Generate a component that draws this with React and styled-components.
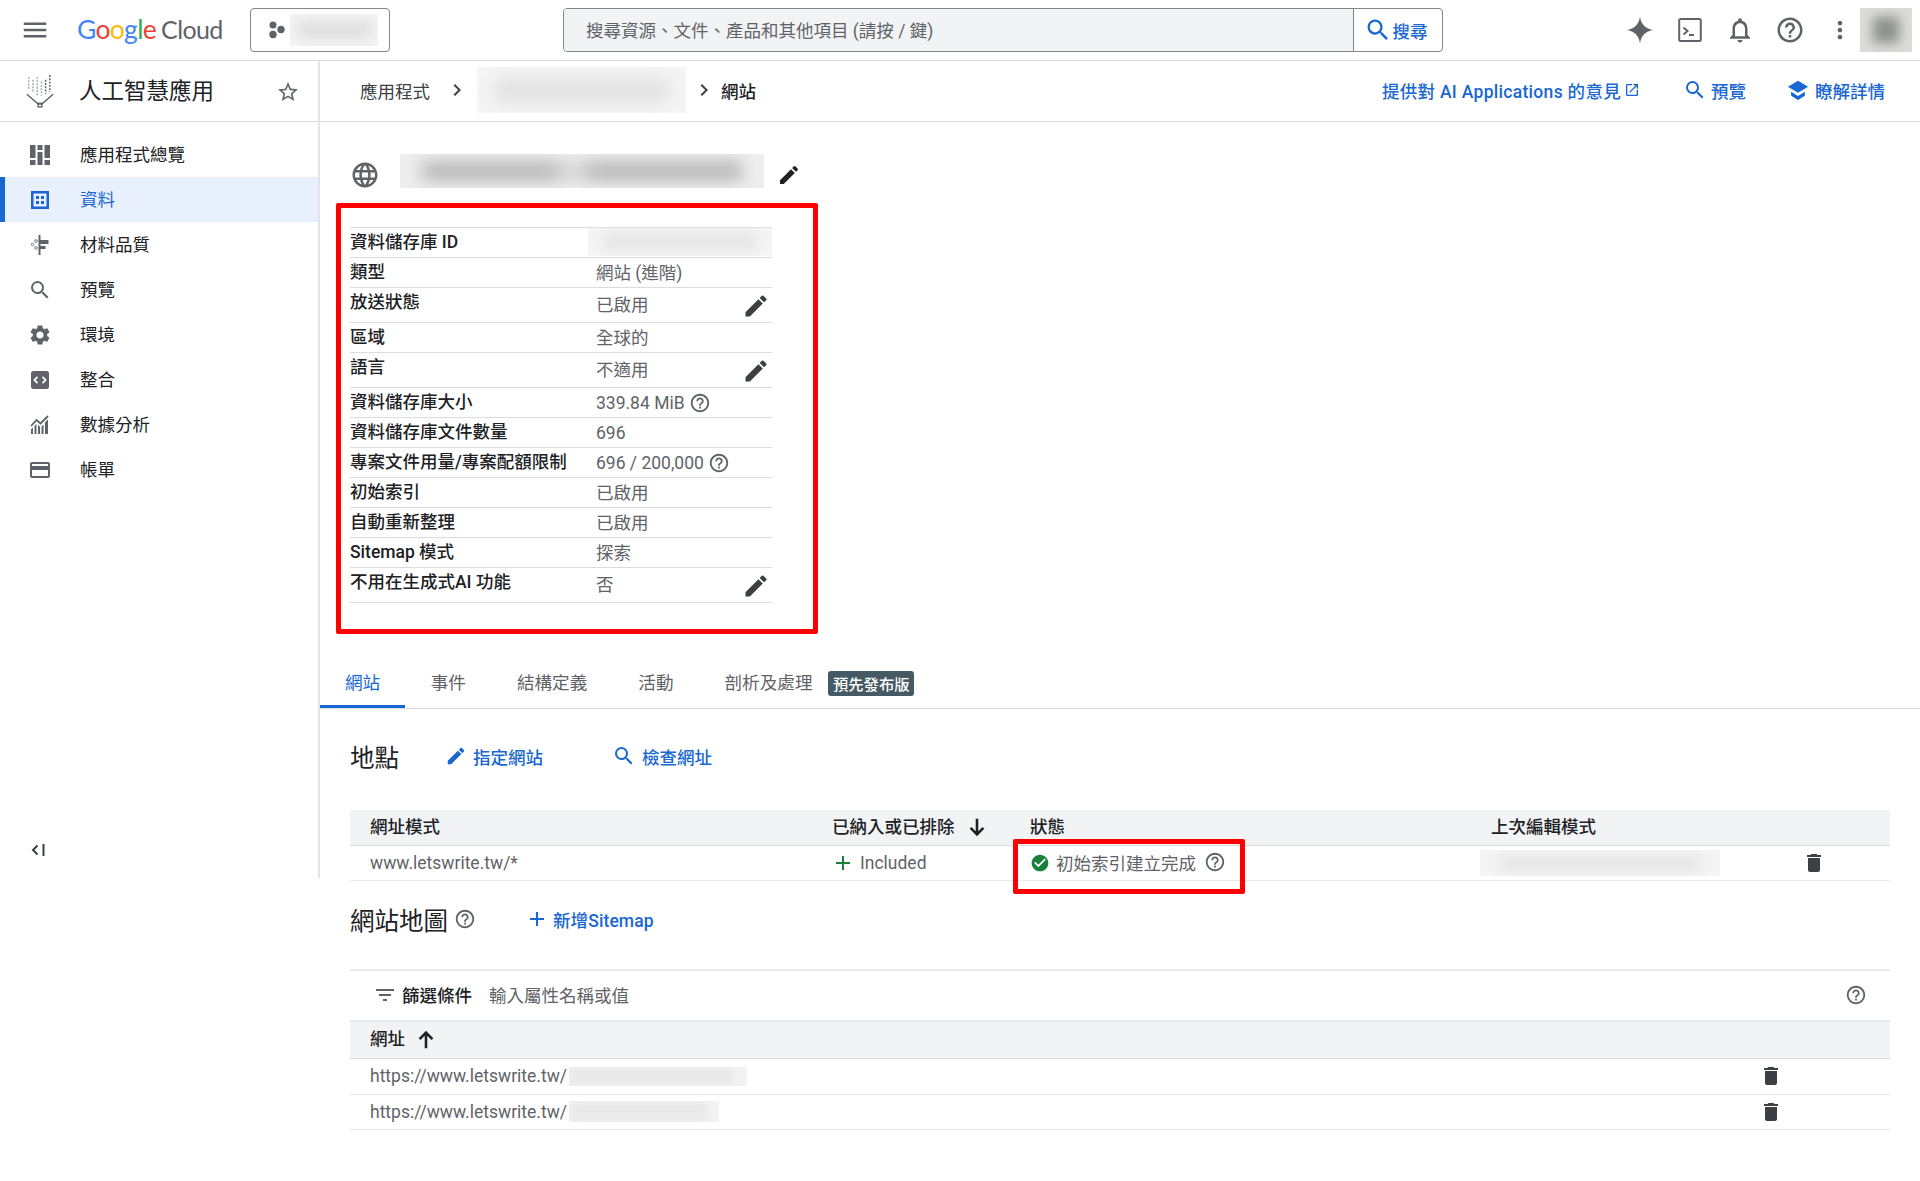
import React from "react";
import styled, { createGlobalStyle, css } from "styled-components";
import {
  MdAdd,
  MdCheckCircle,
  MdChevronRight,
  MdCreditCard,
  MdDelete,
  MdEdit,
  MdFilterList,
  MdHelpOutline,
  MdLanguage,
  MdMenu,
  MdMoreVert,
  MdOpenInNew,
  MdOutlineNotifications,
  MdSearch,
  MdSettings,
  MdStarBorder,
} from "react-icons/md";

const BLUE = "#1967d2";
const INK = "#202124";
const GREY = "#5f6368";
const LINE = "#dadce0";

const GlobalStyle = createGlobalStyle`
  html, body { margin: 0; background: #fff; }
  body {
    font-family: Roboto, "Noto Sans CJK TC", sans-serif;
    font-size: 17.5px;
    color: ${INK};
  }
  * { box-sizing: border-box; }
`;

/* blurred-out private values */
const Redacted = styled.div`
  position: relative;
  flex: none;
  overflow: hidden;
  width: ${(p) => p.$w}px;
  height: ${(p) => p.$h}px;
  background: ${(p) => p.$bg || "#f5f5f5"};
  &::after {
    content: "";
    position: absolute;
    inset: ${(p) => p.$inset || "25% 8%"};
    background: ${(p) => p.$tone || "#e2e2e2"};
    filter: blur(${(p) => p.$blur || 7}px);
  }
`;

/* the red boxes drawn over the screenshot */
const Annotation = styled.div`
  position: absolute;
  top: ${(p) => p.$top}px;
  left: ${(p) => p.$left}px;
  width: ${(p) => p.$w}px;
  height: ${(p) => p.$h}px;
  border: 5px solid #ff0000;
  border-radius: 2px;
  pointer-events: none;
`;

const TopBar = styled.header`
  display: flex;
  align-items: center;
  height: 61px;
  padding: 0 8px 0 20px;
  border-bottom: 1px solid ${LINE};
`;

const IconSlot = styled.span`
  display: inline-flex;
  align-items: center;
  justify-content: center;
  width: ${(p) => p.$size || 40}px;
  height: 40px;
  flex: none;
  color: ${GREY};
`;

const Logo = styled.div`
  width: 173px;
  margin-left: 27px;
  padding-bottom: 2px;
  font-family: Lato, Roboto, sans-serif;
  font-size: 26.5px;
  line-height: 1;
  letter-spacing: -0.7px;
  white-space: nowrap;
  flex: none;
`;

const LogoLetter = styled.span`
  color: ${(p) => p.$color};
`;

const CloudWord = styled.span`
  margin-left: 5px;
  color: ${GREY};
  font-size: 25px;
  letter-spacing: -0.6px;
`;

const ProjectButton = styled.div`
  display: flex;
  align-items: center;
  gap: 4px;
  width: 140px;
  height: 44px;
  padding-left: 17px;
  border: 1px solid #80868b;
  border-radius: 4px;
  flex: none;
`;

const SearchBox = styled.div`
  display: flex;
  width: 880px;
  height: 44px;
  margin-left: 173px;
  border: 1px solid #80868b;
  border-radius: 4px;
  overflow: hidden;
  flex: none;
`;

const SearchInput = styled.div`
  flex: 1;
  display: flex;
  align-items: center;
  padding: 0 0 2px 22px;
  background: #f1f3f4;
  color: ${GREY};
`;

const SearchButton = styled.div`
  display: flex;
  align-items: center;
  justify-content: center;
  width: 89px;
  padding-right: 5px;
  gap: 1px;
  border-left: 1px solid #80868b;
  color: ${BLUE};
  font-weight: 500;
`;

const TopActions = styled.div`
  display: flex;
  align-items: center;
  gap: 10px;
  margin-left: auto;
`;

const Avatar = styled(Redacted)`
  margin-left: -10px;
`;

const Body = styled.div`
  display: flex;
  align-items: flex-start;
`;

const Sidebar = styled.aside`
  display: flex;
  flex-direction: column;
  width: 320px;
  height: 817px;
  border-right: 2px solid #e3e4e6;
  flex: none;
`;

const SidebarHead = styled.div`
  display: flex;
  align-items: center;
  height: 61px;
  padding-left: 24px;
  border-bottom: 1px solid ${LINE};
  flex: none;
`;

const AppLogoBox = styled.span`
  display: inline-flex;
  margin-left: 1px;
`;

const ProductName = styled.div`
  margin-left: 24px;
  padding-bottom: 4px;
  font-size: 22.5px;
  width: 197px;
`;

const Star = styled(MdStarBorder)`
  margin-top: 2px;
  color: ${GREY};
`;

const NavList = styled.nav`
  display: flex;
  flex-direction: column;
  padding-top: 10px;
`;

const NavItem = styled.div`
  display: flex;
  align-items: center;
  height: 45px;
  padding: 0 0 2px 30px;
  gap: 30px;
  color: ${INK};
  svg { flex: none; color: ${GREY}; margin-top: 2px; }
  ${(p) =>
    p.$active &&
    css`
      background: #e8f0fe;
      color: ${BLUE};
      box-shadow: inset 5px 0 0 ${BLUE};
      svg { color: ${BLUE}; }
    `}
`;

const BigNavIcon = styled.span`
  display: inline-flex;
  margin: 0 -2px;
`;

const Collapse = styled.div`
  margin-top: auto;
  padding: 0 0 18px 29px;
  display: flex;
  color: #3c4043;
`;

const Main = styled.main`
  flex: 1;
  min-width: 0;
`;

const PageBar = styled.div`
  display: flex;
  align-items: center;
  height: 61px;
  padding: 0 35px 2px 40px;
  border-bottom: 1px solid ${LINE};
`;

const Crumb = styled.span`
  color: ${(p) => (p.$current ? INK : "#3c4043")};
  font-weight: ${(p) => (p.$current ? 500 : 400)};
`;

const CrumbArrow = styled.span`
  display: inline-flex;
  margin: ${(p) => p.$margin};
  color: #3c4043;
`;

const PageActions = styled.div`
  display: flex;
  align-items: center;
  margin-left: auto;
`;

const BlueLink = styled.span`
  display: inline-flex;
  align-items: center;
  gap: ${(p) => p.$gap ?? 7}px;
  margin-left: ${(p) => p.$ml || 0}px;
  color: ${BLUE};
  font-weight: 500;
  letter-spacing: ${(p) => p.$track || 0}px;
  white-space: nowrap;
`;

const NudgedSearch = styled(MdSearch)`
  margin: 0 -3px;
`;

const Detail = styled.section`
  padding: 32px 0 0 30px;
`;

const TitleRow = styled.div`
  display: flex;
  align-items: center;
  height: 34px;
  color: ${GREY};
`;

const TitleGlobe = styled(MdLanguage)`
  margin: 8px 20px 0 0;
`;

const TitleEdit = styled.span`
  display: inline-flex;
  margin: 8px 0 0 13px;
  color: #202124;
`;

const PropertyPanel = styled.div`
  position: relative;
  width: 422px;
  margin-top: 39px;
  border-top: 1px solid ${LINE};
`;

const PropertyRow = styled.div`
  display: grid;
  grid-template-columns: 246px 1fr 30px;
  height: ${(p) => (p.$edit ? 35 : 30)}px;
  border-bottom: 1px solid ${LINE};
  line-height: 28px;
  white-space: nowrap;
`;

const PropertyName = styled.div`
  color: ${INK};
  font-weight: 500;
`;

const PropertyValue = styled.div`
  display: flex;
  align-items: center;
  gap: 4px;
  height: 28px;
  margin-top: ${(p) => (p.$edit ? 3 : 1)}px;
  color: ${GREY};
`;

const PropertyRedacted = styled(Redacted)`
  grid-column: 2 / 4;
  margin-left: -8px;
`;

const PropertyEdit = styled.div`
  display: flex;
  align-items: center;
  color: #3c4043;
  margin-top: 2px;
`;

const Tabs = styled.div`
  display: flex;
  align-items: center;
  height: 51px;
  margin-top: 55px;
  border-bottom: 1px solid ${LINE};
`;

const Tab = styled.div`
  display: flex;
  align-items: center;
  height: 50px;
  padding: 0 ${(p) => (p.$active ? 25 : 25.5)}px 3px;
  font-size: 17.6px;
  color: ${(p) => (p.$active ? BLUE : GREY)};
  box-shadow: ${(p) => (p.$active ? `inset 0 -3px 0 ${BLUE}` : "none")};
`;

const PreviewBadge = styled.span`
  display: inline-flex;
  align-items: center;
  height: 25px;
  padding: 0 5px 1px;
  margin-left: -10px;
  background: #455a64;
  border-radius: 3px;
  color: #fff;
  font-size: 15.3px;
  font-weight: 500;
`;

const Section = styled.section`
  padding: 0 30px;
`;

const SectionHead = styled.div`
  display: flex;
  align-items: center;
  height: 40px;
  margin-top: ${(p) => p.$mt}px;
  padding-bottom: 2px;
`;

const SectionTitle = styled.h2`
  margin: 0;
  font-size: 24.5px;
  font-weight: 400;
  color: ${INK};
  white-space: nowrap;
`;

const HelpIcon = styled(MdHelpOutline)`
  color: ${GREY};
  flex: none;
  margin-left: ${(p) => p.$ml || 0}px;
`;

const TableHead = styled.div`
  display: grid;
  grid-template-columns: ${(p) => p.$cols};
  align-items: center;
  height: ${(p) => p.$h}px;
  margin-top: ${(p) => p.$mt || 0}px;
  padding-bottom: 5px;
  background: #f1f3f4;
  border-bottom: 1px solid ${LINE};
  font-weight: 500;
  color: ${INK};
`;

const TableRow = styled.div`
  display: grid;
  grid-template-columns: ${(p) => p.$cols};
  height: ${(p) => p.$h}px;
  border-bottom: 1px solid ${(p) => p.$line || "#e8eaed"};
  color: ${GREY};
`;

const Cell = styled.div`
  position: relative;
  display: flex;
  align-items: center;
  padding-left: ${(p) => p.$pl || 0}px;
  padding-bottom: ${(p) => p.$pb || 0}px;
  gap: ${(p) => p.$gap || 0}px;
  white-space: nowrap;
  min-width: 0;
`;

const StatusIcon = styled(MdCheckCircle)`
  color: #188038;
  flex: none;
  margin-top: 2px;
`;

const RowTrash = styled(MdDelete)`
  color: #3c4043;
  flex: none;
`;

const RowRedacted = styled(Redacted)`
  margin-left: ${(p) => p.$ml || 0}px;
`;

const ArrowSvg = styled.svg`
  flex: none;
  margin-top: 4px;
  transform: rotate(${(p) => (p.$up ? 180 : 0)}deg);
`;

const FilterBar = styled.div`
  display: flex;
  align-items: center;
  height: 53px;
  margin-top: 29px;
  padding: 0 23px 2px 23px;
  border-top: 2px solid #e8eaed;
  border-bottom: 2px solid #e8eaed;
`;

const FilterLabel = styled.span`
  margin-left: 5px;
  font-weight: 500;
  color: ${INK};
`;

const FilterHint = styled.span`
  margin-left: 17px;
  color: ${GREY};
`;

const FilterHelp = styled(HelpIcon)`
  margin-left: auto;
`;

const SortArrow = ({ up }) => (
  <ArrowSvg $up={up} width="22" height="22" viewBox="0 0 24 24" fill="none" stroke="#202124" strokeWidth="2.800">
    <path d="M12 3v17M5 13l7 7 7-7" />
  </ArrowSvg>
);

const ProjectDots = () => (
  <svg width="18" height="18" viewBox="0 0 18 18" fill="#5f6368">
    <circle cx="5" cy="4" r="3.5" />
    <circle cx="13" cy="8.5" r="3.7" />
    <circle cx="5" cy="13.5" r="3.7" />
  </svg>
);

const SparkIcon = () => (
  <svg width="30" height="30" viewBox="0 0 30 30" fill="#5f6368">
    <path d="M15 1.5c1 7.6 5.4 12.4 13.5 13.5C20.4 16.1 16 20.9 15 28.5 14 20.9 9.6 16.1 1.5 15 9.6 13.9 14 9.1 15 1.5z" />
  </svg>
);

const TerminalIcon = () => (
  <svg width="24" height="30" viewBox="0 0 24 30" fill="none" stroke="#5f6368">
    <rect x="1.2" y="4" width="21.6" height="22" rx="1.5" strokeWidth="2" />
    <path d="M5.5 12.5 9.5 16l-4 3.5" strokeWidth="2" />
    <path d="M11 20h5" strokeWidth="2" />
  </svg>
);

const SchoolIcon = () => (
  <svg width="22" height="24" viewBox="0 0 24 24" fill={BLUE}>
    <path d="M12 2 1 8.500 12 15l11-6.500z" />
    <path d="M4.500 14v4.300L12 23l7.500-4.700V14L12 18.500z" />
  </svg>
);

const AppLogo = () => (
  <svg width="30" height="34" viewBox="0 0 32 36" fill="none">
    <g stroke="#9aa0a6" strokeWidth="1.400" strokeDasharray="2 1.500">
      <path d="M4 3v13M8.500 6v14M13 3v20M17.500 8v15" />
    </g>
    <g stroke="#5f6368" strokeWidth="1.600" strokeDasharray="2 1.500">
      <path d="M22 6v15M26.500 1v18" />
    </g>
    <path d="M2 21.500 14 32h4l12-10.500" stroke="#5f6368" strokeWidth="1.500" />
    <rect x="14" y="31" width="4" height="4" stroke="#5f6368" strokeWidth="1.400" />
  </svg>
);

const OverviewIcon = () => (
  <svg width="20" height="20" viewBox="0 0 20 20" fill="currentColor">
    <rect x="0" y="0" width="5.500" height="13" />
    <rect x="0" y="15" width="5.500" height="5" />
    <rect x="7.500" y="0" width="5" height="5" />
    <rect x="7.500" y="7" width="5" height="13" />
    <rect x="14.500" y="0" width="5.500" height="13" />
    <rect x="14.500" y="15" width="5.500" height="5" />
  </svg>
);

const DataIcon = () => (
  <svg width="20" height="20" viewBox="0 0 20 20" fill="currentColor">
    <path d="M1 1h18v18H1zM3.500 3.500v13h13v-13z" fillRule="evenodd" />
    <rect x="6" y="6" width="3" height="3" />
    <rect x="11" y="6" width="3" height="3" />
    <rect x="6" y="11" width="3" height="3" />
    <rect x="11" y="11" width="3" height="3" />
  </svg>
);

const QualityIcon = () => (
  <svg width="20" height="20" viewBox="0 0 20 20" fill="none">
    <path d="M9.500 0v20" stroke="currentColor" strokeWidth="2" />
    <rect x="9.500" y="5" width="9" height="4" fill="currentColor" />
    <rect x="9.500" y="11" width="6" height="3" fill="currentColor" />
    <circle cx="6" cy="6" r="1.300" stroke="currentColor" strokeWidth="0.800" />
    <circle cx="2.500" cy="9.500" r="1.300" stroke="currentColor" strokeWidth="0.800" />
    <circle cx="6" cy="13" r="1.300" stroke="currentColor" strokeWidth="0.800" />
  </svg>
);

const IntegrationIcon = () => (
  <svg width="20" height="20" viewBox="0 0 20 20">
    <rect x="1" y="1" width="18" height="18" rx="2.500" fill="currentColor" />
    <path d="M7.500 6.800 4.500 10l3 3.200M12.500 6.800l3 3.200-3 3.200" fill="none" stroke="#fff" strokeWidth="1.800" />
  </svg>
);

const AnalyticsIcon = () => (
  <svg width="20" height="20" viewBox="0 0 20 20" fill="currentColor">
    <path d="M1 11 6.500 5l4 3.500L18 1" fill="none" stroke="currentColor" strokeWidth="1.800" />
    <path d="M1 14.500l2-2V19H1zM4.500 11l2-2v10h-2zM8 10l2 1.800V19H8zM11.500 11.500l2-2V19h-2zM15 7.500l3-3.200V19h-3z" />
  </svg>
);

const CollapseIcon = () => (
  <svg width="20" height="20" viewBox="0 0 20 20" fill="none" stroke="currentColor" strokeWidth="2">
    <path d="M8.500 5.500 4 10l4.500 4.500M14.500 4v12" />
  </svg>
);

const navItems = [
  { label: "應用程式總覽", icon: <OverviewIcon /> },
  { label: "資料", icon: <DataIcon />, active: true },
  { label: "材料品質", icon: <QualityIcon /> },
  { label: "預覽", icon: <BigNavIcon><MdSearch size={24} /></BigNavIcon> },
  { label: "環境", icon: <BigNavIcon><MdSettings size={24} /></BigNavIcon> },
  { label: "整合", icon: <IntegrationIcon /> },
  { label: "數據分析", icon: <AnalyticsIcon /> },
  { label: "帳單", icon: <BigNavIcon><MdCreditCard size={24} /></BigNavIcon> },
];

const properties = [
  { name: "資料儲存庫 ID", redacted: true },
  { name: "類型", value: "網站 (進階)" },
  { name: "放送狀態", value: "已啟用", edit: true },
  { name: "區域", value: "全球的" },
  { name: "語言", value: "不適用", edit: true },
  { name: "資料儲存庫大小", value: "339.84 MiB", help: true },
  { name: "資料儲存庫文件數量", value: "696" },
  { name: "專案文件用量/專案配額限制", value: "696 / 200,000", help: true },
  { name: "初始索引", value: "已啟用" },
  { name: "自動重新整理", value: "已啟用" },
  { name: "Sitemap 模式", value: "探索" },
  { name: "不用在生成式AI 功能", value: "否", edit: true },
];

const googleLetters = [
  ["G", "#4285F4"],
  ["o", "#EA4335"],
  ["o", "#FBBC05"],
  ["g", "#4285F4"],
  ["l", "#34A853"],
  ["e", "#EA4335"],
];

const SITE_COLS = "481px 197px 461px 1fr 100px";
const MAP_COLS = "1fr 131px";

const TITLE_BLOBS = "linear-gradient(90deg, #b9b9b9 0 40%, #dedede 47%, #b9b9b9 54% 100%)";

const sitemapRows = [
  { w: 178, h: 19 },
  { w: 150, h: 21 },
];

export default function App() {
  return (
    <>
      <GlobalStyle />
      <TopBar>
        <MdMenu size={30} color={GREY} />
        <Logo>
          {googleLetters.map(([ch, color], i) => (
            <LogoLetter key={i} $color={color}>
              {ch}
            </LogoLetter>
          ))}
          <CloudWord>Cloud</CloudWord>
        </Logo>
        <ProjectButton>
          <ProjectDots />
          <Redacted $w={88} $h={32} $bg="#f4f4f4" $tone="#dcdcdc" />
        </ProjectButton>
        <SearchBox>
          <SearchInput>搜尋資源、文件、產品和其他項目 (請按 / 鍵)</SearchInput>
          <SearchButton>
            <MdSearch size={28} />
            搜尋
          </SearchButton>
        </SearchBox>
        <TopActions>
          <IconSlot>
            <SparkIcon />
          </IconSlot>
          <IconSlot>
            <TerminalIcon />
          </IconSlot>
          <IconSlot>
            <MdOutlineNotifications size={30} />
          </IconSlot>
          <IconSlot>
            <MdHelpOutline size={30} />
          </IconSlot>
          <IconSlot>
            <MdMoreVert size={28} />
          </IconSlot>
          <Avatar $w={52} $h={44} $bg="#dcdcda" $tone="#8d908a" $inset="20% 25%" $blur={6} />
        </TopActions>
      </TopBar>

      <Body>
        <Sidebar>
          <SidebarHead>
            <AppLogoBox>
              <AppLogo />
            </AppLogoBox>
            <ProductName>人工智慧應用</ProductName>
            <Star size={24} />
          </SidebarHead>
          <NavList>
            {navItems.map((item) => (
              <NavItem key={item.label} $active={item.active}>
                {item.icon}
                {item.label}
              </NavItem>
            ))}
          </NavList>
          <Collapse>
            <CollapseIcon />
          </Collapse>
        </Sidebar>

        <Main>
          <PageBar>
            <Crumb>應用程式</Crumb>
            <CrumbArrow $margin="0 8px 0 15px">
              <MdChevronRight size={24} />
            </CrumbArrow>
            <Redacted $w={209} $h={46} $tone="#e0e0e0" $blur={9} />
            <CrumbArrow $margin="0 5px 0 6px">
              <MdChevronRight size={24} />
            </CrumbArrow>
            <Crumb $current>網站</Crumb>
            <PageActions>
              <BlueLink $gap={3} $track={0.3}>
                提供對 AI Applications 的意見
                <MdOpenInNew size={16} />
              </BlueLink>
              <BlueLink $ml={46}>
                <NudgedSearch size={24} />
                預覽
              </BlueLink>
              <BlueLink $ml={41} $gap={6}>
                <SchoolIcon />
                瞭解詳情
              </BlueLink>
            </PageActions>
          </PageBar>

          <Detail>
            <TitleRow>
              <TitleGlobe size={30} />
              <Redacted $w={364} $h={34} $tone={TITLE_BLOBS} $bg="#eeeeee" $inset="22% 6%" $blur={8} />
              <TitleEdit>
                <MdEdit size={24} />
              </TitleEdit>
            </TitleRow>

            <PropertyPanel>
              {properties.map((row) => (
                <PropertyRow key={row.name} $edit={row.edit}>
                  <PropertyName>{row.name}</PropertyName>
                  {row.redacted ? (
                    <PropertyRedacted $w={184} $h={28} />
                  ) : (
                    <PropertyValue $edit={row.edit}>
                      {row.value}
                      {row.help && <HelpIcon size={22} />}
                    </PropertyValue>
                  )}
                  {row.edit && (
                    <PropertyEdit>
                      <MdEdit size={28} />
                    </PropertyEdit>
                  )}
                </PropertyRow>
              ))}
              <Annotation $top={-25} $left={-14} $w={482} $h={431} />
            </PropertyPanel>
          </Detail>

          <Tabs>
            <Tab $active>網站</Tab>
            <Tab>事件</Tab>
            <Tab>結構定義</Tab>
            <Tab>活動</Tab>
            <Tab>剖析及處理</Tab>
            <PreviewBadge>預先發布版</PreviewBadge>
          </Tabs>

          <Section>
            <SectionHead $mt={28}>
              <SectionTitle>地點</SectionTitle>
              <BlueLink $ml={46} $gap={6}>
                <MdEdit size={22} />
                指定網站
              </BlueLink>
              <BlueLink $ml={72} $gap={9}>
                <NudgedSearch size={24} />
                檢查網址
              </BlueLink>
            </SectionHead>

            <TableHead $cols={SITE_COLS} $h={36} $mt={33}>
              <Cell $pl={20}>網址模式</Cell>
              <Cell $pl={1} $gap={11}>
                已納入或已排除
                <SortArrow />
              </Cell>
              <Cell $pl={2}>狀態</Cell>
              <Cell $pl={2}>上次編輯模式</Cell>
              <Cell />
            </TableHead>
            <TableRow $cols={SITE_COLS} $h={35}>
              <Cell $pl={20}>www.letswrite.tw/*</Cell>
              <Cell $gap={5}>
                <MdAdd size={24} color="#188038" />
                Included
              </Cell>
              <Cell $pl={2} $pb={2} $gap={6}>
                <StatusIcon size={20} />
                初始索引建立完成
                <HelpIcon size={22} $ml={2} />
                <Annotation $top={-7} $left={-15} $w={232} $h={55} />
              </Cell>
              <Cell>
                <RowRedacted $w={240} $h={26} $ml={-9} />
              </Cell>
              <Cell $pl={12}>
                <RowTrash size={24} />
              </Cell>
            </TableRow>

            <SectionHead $mt={19}>
              <SectionTitle>網站地圖</SectionTitle>
              <HelpIcon size={22} $ml={6} />
              <BlueLink $ml={49} $gap={4} $track={0.1}>
                <MdAdd size={24} />
                新增Sitemap
              </BlueLink>
            </SectionHead>

            <FilterBar>
              <MdFilterList size={24} color={GREY} />
              <FilterLabel>篩選條件</FilterLabel>
              <FilterHint>輸入屬性名稱或值</FilterHint>
              <FilterHelp size={22} />
            </FilterBar>
            <TableHead $cols={MAP_COLS} $h={37}>
              <Cell $pl={20} $gap={10}>
                網址
                <SortArrow up />
              </Cell>
              <Cell />
            </TableHead>
            {sitemapRows.map((row) => (
              <TableRow key={row.w} $cols={MAP_COLS} $h={35.5} $line="#e3e4e6">
                <Cell $pl={20} $gap={2}>
                  https://www.letswrite.tw/
                  <Redacted $w={row.w} $h={row.h} $bg="#f3f3f3" $inset="0 8% 0 0" $blur={5} $tone="#e8e8e8" />
                </Cell>
                <Cell>
                  <RowTrash size={24} />
                </Cell>
              </TableRow>
            ))}
          </Section>
        </Main>
      </Body>
    </>
  );
}
